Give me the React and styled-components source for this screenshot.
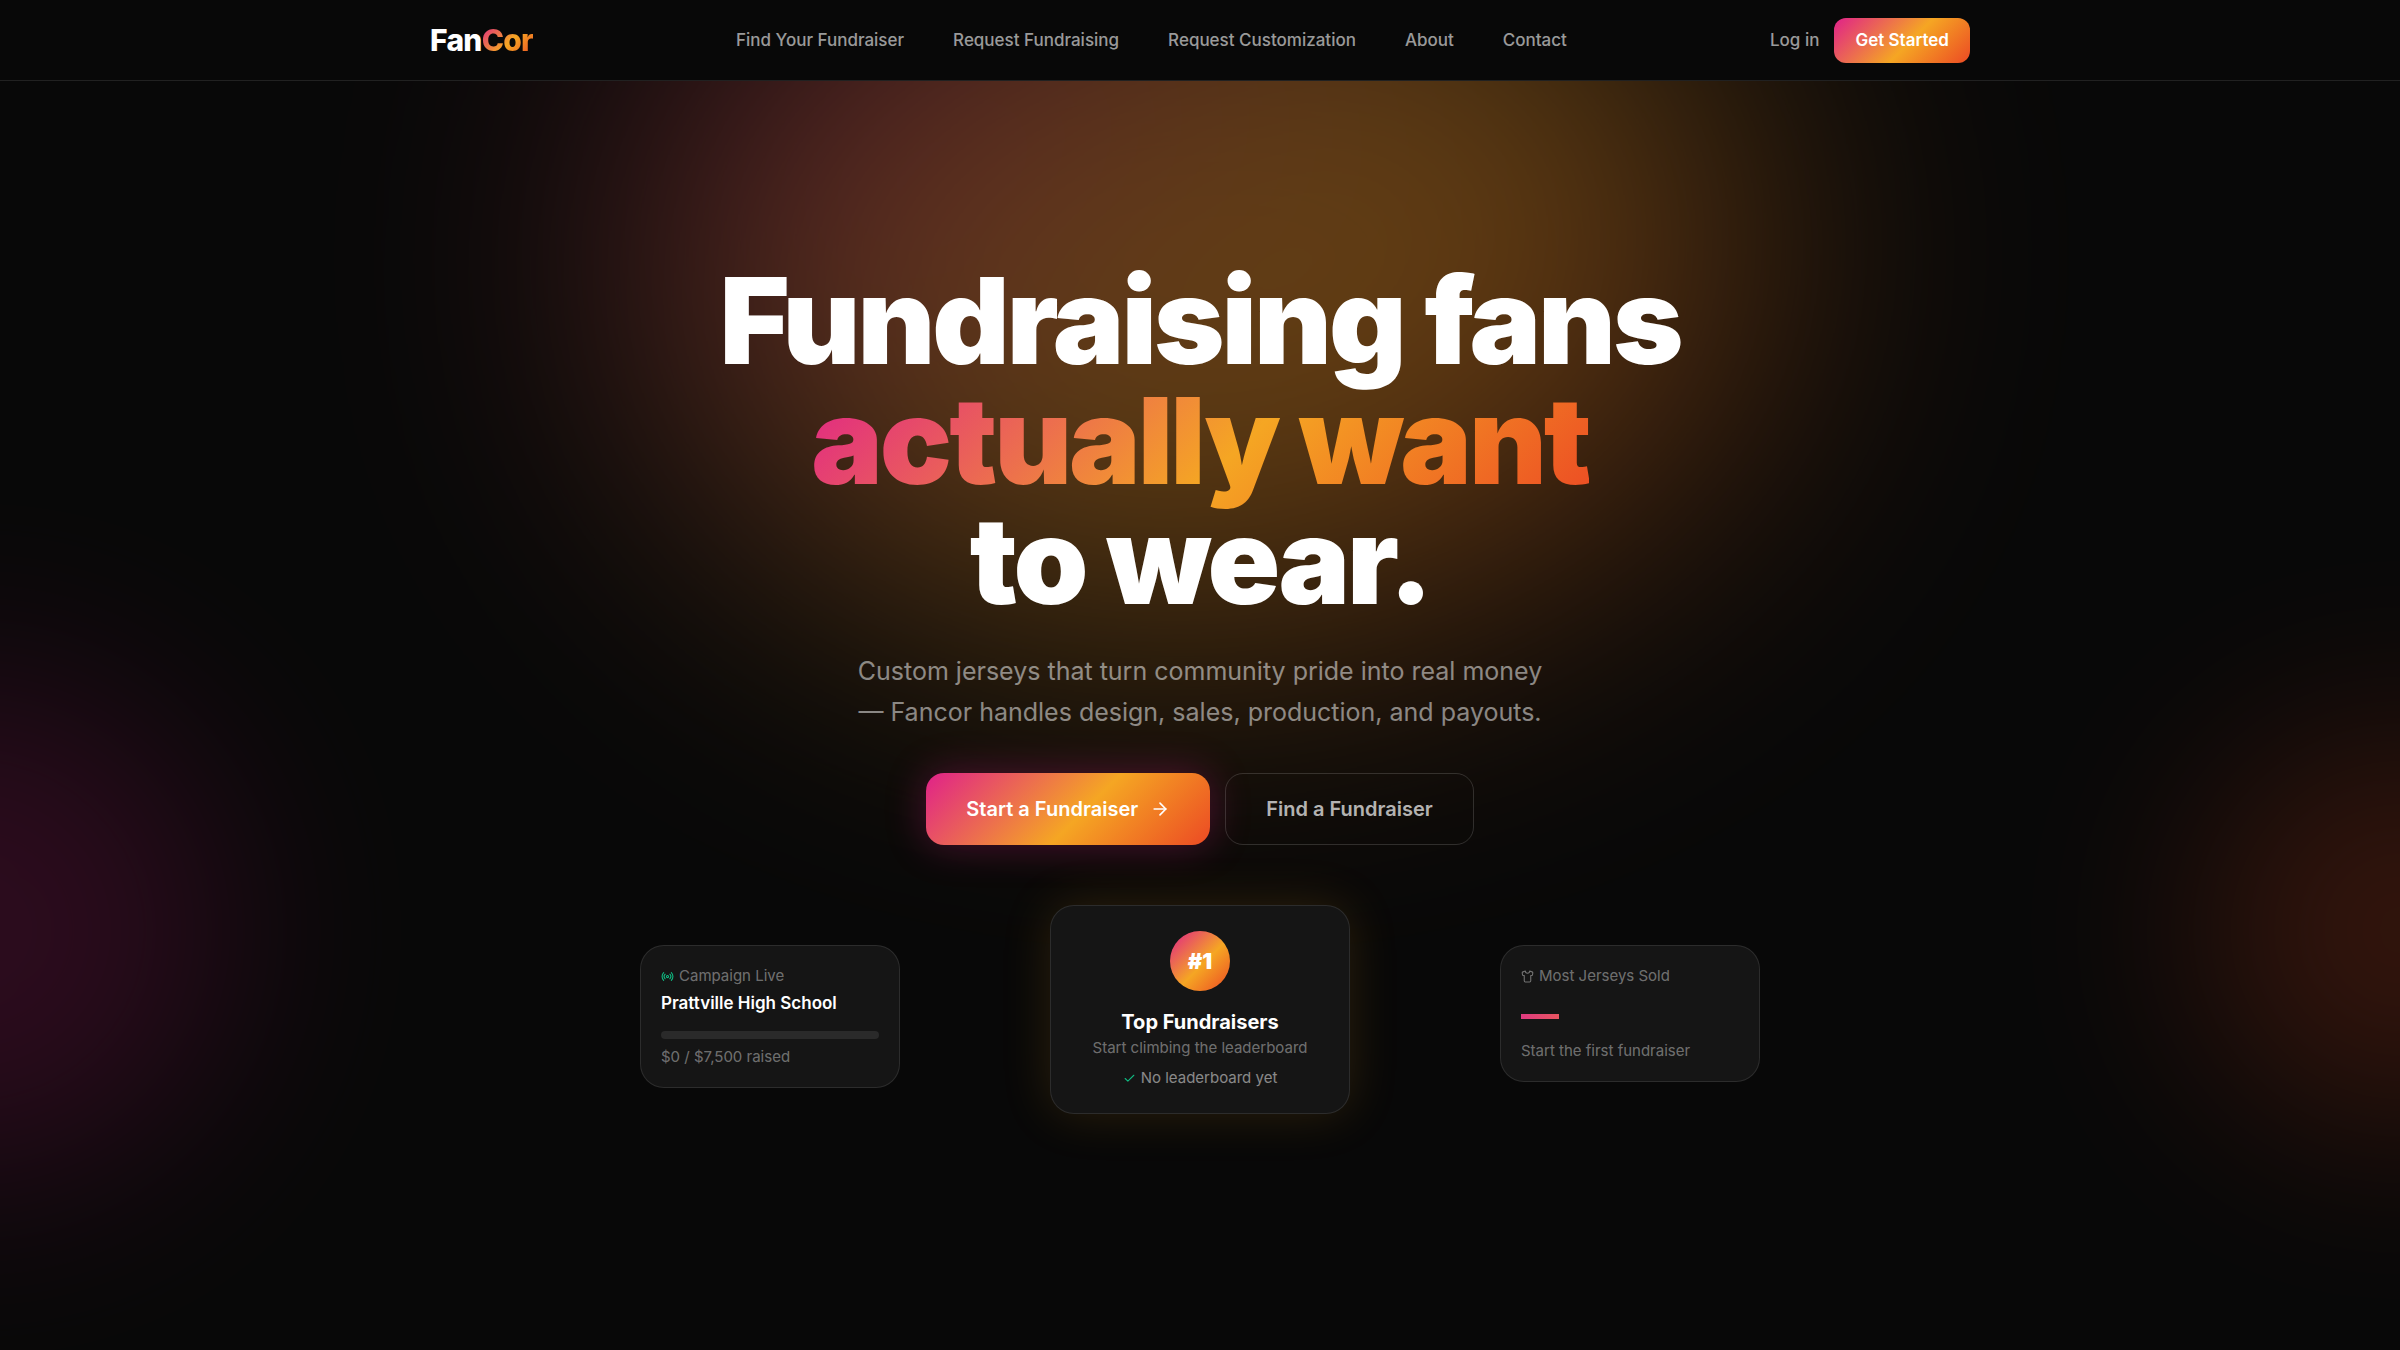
import React from 'react';
import styled, { createGlobalStyle } from 'styled-components';
import { ArrowRight, Check, Radio, Shirt } from 'lucide-react';

const Colors = {
  background: '#080808',
  card: '#151515',
  line: 'rgba(255, 255, 255, 0.1)',
  white: '#ffffff',
  text: 'rgba(255, 255, 255, 0.7)',
  muted: 'rgba(255, 255, 255, 0.6)',
  faint: 'rgba(255, 255, 255, 0.4)',
  green: '#10b981',
  gradient: 'linear-gradient(135deg, #e0218a 0%, #f5a623 55%, #ec4a24 100%)',
};

const GlobalStyle = createGlobalStyle`
  * {
    box-sizing: border-box;
  }

  body {
    margin: 0;
    background: ${Colors.background};
    color: ${Colors.white};
    font-family: Inter, "Liberation Sans", sans-serif;
    -webkit-font-smoothing: antialiased;
  }
`;

const Page = styled.div`
  min-height: 100vh;
  display: flex;
  flex-direction: column;
`;

const Header = styled.header`
  position: relative;
  z-index: 1;
  background: ${Colors.background};
  border-bottom: 1px solid ${Colors.line};
`;

const HeaderInner = styled.div`
  max-width: 1600px;
  height: 80px;
  margin: 0 auto;
  padding: 0 30px;
  display: flex;
  align-items: center;
  justify-content: space-between;
`;

const Logo = styled.a`
  color: ${Colors.white};
  font-size: 30px;
  font-weight: 800;
  letter-spacing: -0.025em;
  text-decoration: none;
`;

const GradientText = styled.span`
  background: ${Colors.gradient};
  background-clip: text;
  color: transparent;
`;

const Nav = styled.nav`
  display: flex;
  gap: 49px;
`;

const NavLink = styled.a`
  color: ${Colors.muted};
  font-size: 17px;
  font-weight: 500;
  text-decoration: none;
`;

const Actions = styled.div`
  display: flex;
  align-items: center;
  gap: 15px;
`;

const SmallButton = styled.button`
  height: 45px;
  padding: 0 21px;
  border: 0;
  border-radius: 12px;
  background: ${Colors.gradient};
  color: ${Colors.white};
  font: 600 17px Inter, sans-serif;
`;

const Hero = styled.main`
  position: relative;
  flex: 1;
  overflow: hidden;
  padding: 180px 30px 120px;
  display: flex;
  flex-direction: column;
  align-items: center;
`;

const Glow = styled.div`
  position: absolute;
  border-radius: 50%;
  pointer-events: none;
`;

const TopGlow = styled(Glow)`
  top: -200px;
  left: 50%;
  width: 1125px;
  height: 750px;
  background: ${Colors.gradient};
  filter: blur(160px);
  opacity: 0.38;
  transform: translateX(-50%);
`;

const LeftGlow = styled(Glow)`
  bottom: 170px;
  left: -275px;
  width: 500px;
  height: 500px;
  background: #e0218a;
  filter: blur(105px);
  opacity: 0.17;
`;

const RightGlow = styled(Glow)`
  right: -200px;
  bottom: 220px;
  width: 400px;
  height: 400px;
  background: #f04e23;
  filter: blur(100px);
  opacity: 0.19;
`;

const Title = styled.h1`
  position: relative;
  margin: 0;
  font-size: 120px;
  font-weight: 900;
  letter-spacing: -0.025em;
  line-height: 120px;
  text-align: center;
`;

const Lead = styled.p`
  position: relative;
  max-width: 700px;
  margin: 30px 0 0;
  color: rgba(255, 255, 255, 0.5);
  font-size: 25px;
  line-height: 41px;
  text-align: center;
`;

const ButtonRow = styled.div`
  position: relative;
  display: flex;
  gap: 15px;
  margin-top: 40px;
`;

const HeroButton = styled.button`
  height: 72px;
  padding: 0 40px;
  display: flex;
  align-items: center;
  gap: 12px;
  border: 1px solid rgba(255, 255, 255, 0.15);
  border-radius: 18px;
  background: transparent;
  color: ${Colors.text};
  font: 600 20px Inter, sans-serif;
`;

const PrimaryButton = styled(HeroButton)`
  border: 0;
  background: ${Colors.gradient};
  box-shadow: 0 0 40px rgba(224, 33, 138, 0.3);
  color: ${Colors.white};
`;

const CardRow = styled.div`
  position: relative;
  width: 100%;
  max-width: 1120px;
  margin-top: 60px;
  display: flex;
  align-items: flex-start;
  justify-content: space-between;
`;

const Card = styled.section`
  width: 260px;
  margin-top: 40px;
  padding: 20px;
  border: 1px solid ${Colors.line};
  border-radius: 24px;
  background: ${Colors.card};
`;

const FeaturedCard = styled(Card)`
  width: 300px;
  margin-top: 0;
  padding: 25px;
  display: flex;
  flex-direction: column;
  align-items: center;
  box-shadow: 0 0 50px rgba(245, 166, 35, 0.15);
`;

const CardText = styled.p`
  margin: 0;
  display: flex;
  align-items: center;
  gap: 5px;
  color: ${Colors.faint};
  font-size: 15px;
  line-height: 20px;
`;

const StatusText = styled(CardText)`
  margin-top: 10px;
  color: rgba(255, 255, 255, 0.5);
`;

const CardTitle = styled.h2`
  margin: 5px 0 0;
  font-size: 17px;
  font-weight: 600;
  line-height: 25px;
`;

const FeaturedTitle = styled(CardTitle)`
  margin-top: 15px;
  font-size: 20px;
  font-weight: 700;
  line-height: 32px;
`;

const Track = styled.div`
  height: 8px;
  margin: 15px 0 8px;
  border-radius: 4px;
  background: #2a2a2a;
`;

const Badge = styled.div`
  width: 60px;
  height: 60px;
  display: flex;
  align-items: center;
  justify-content: center;
  border-radius: 50%;
  background: ${Colors.gradient};
  font-size: 22px;
  font-weight: 900;
`;

const Dash = styled.div`
  width: 38px;
  height: 5px;
  margin: 28px 0 22px;
  background: linear-gradient(90deg, #e03a80, #e85560);
`;

const links = [
  'Find Your Fundraiser',
  'Request Fundraising',
  'Request Customization',
  'About',
  'Contact',
];

const App = () => (
  <Page>
    <GlobalStyle />
    <Header>
      <HeaderInner>
        <Logo href="#">Fan<GradientText>Cor</GradientText></Logo>
        <Nav>
          {links.map(link => <NavLink key={link} href="#">{link}</NavLink>)}
        </Nav>
        <Actions>
          <NavLink href="#">Log in</NavLink>
          <SmallButton type="button">Get Started</SmallButton>
        </Actions>
      </HeaderInner>
    </Header>
    <Hero>
      <TopGlow />
      <LeftGlow />
      <RightGlow />
      <Title>
        Fundraising fans<br />
        <GradientText>actually want</GradientText><br />
        to wear.
      </Title>
      <Lead>
        Custom jerseys that turn community pride into real money — Fancor
        handles design, sales, production, and payouts.
      </Lead>
      <ButtonRow>
        <PrimaryButton type="button">
          Start a Fundraiser
          <ArrowRight size={20} />
        </PrimaryButton>
        <HeroButton type="button">Find a Fundraiser</HeroButton>
      </ButtonRow>
      <CardRow>
        <Card>
          <CardText><Radio size={13} color={Colors.green} />Campaign Live</CardText>
          <CardTitle>Prattville High School</CardTitle>
          <Track />
          <CardText>$0 / $7,500 raised</CardText>
        </Card>
        <FeaturedCard>
          <Badge>#1</Badge>
          <FeaturedTitle>Top Fundraisers</FeaturedTitle>
          <CardText>Start climbing the leaderboard</CardText>
          <StatusText>
            <Check size={13} color={Colors.green} />No leaderboard yet
          </StatusText>
        </FeaturedCard>
        <Card>
          <CardText><Shirt size={13} />Most Jerseys Sold</CardText>
          <Dash />
          <CardText>Start the first fundraiser</CardText>
        </Card>
      </CardRow>
    </Hero>
  </Page>
);

export default App;
